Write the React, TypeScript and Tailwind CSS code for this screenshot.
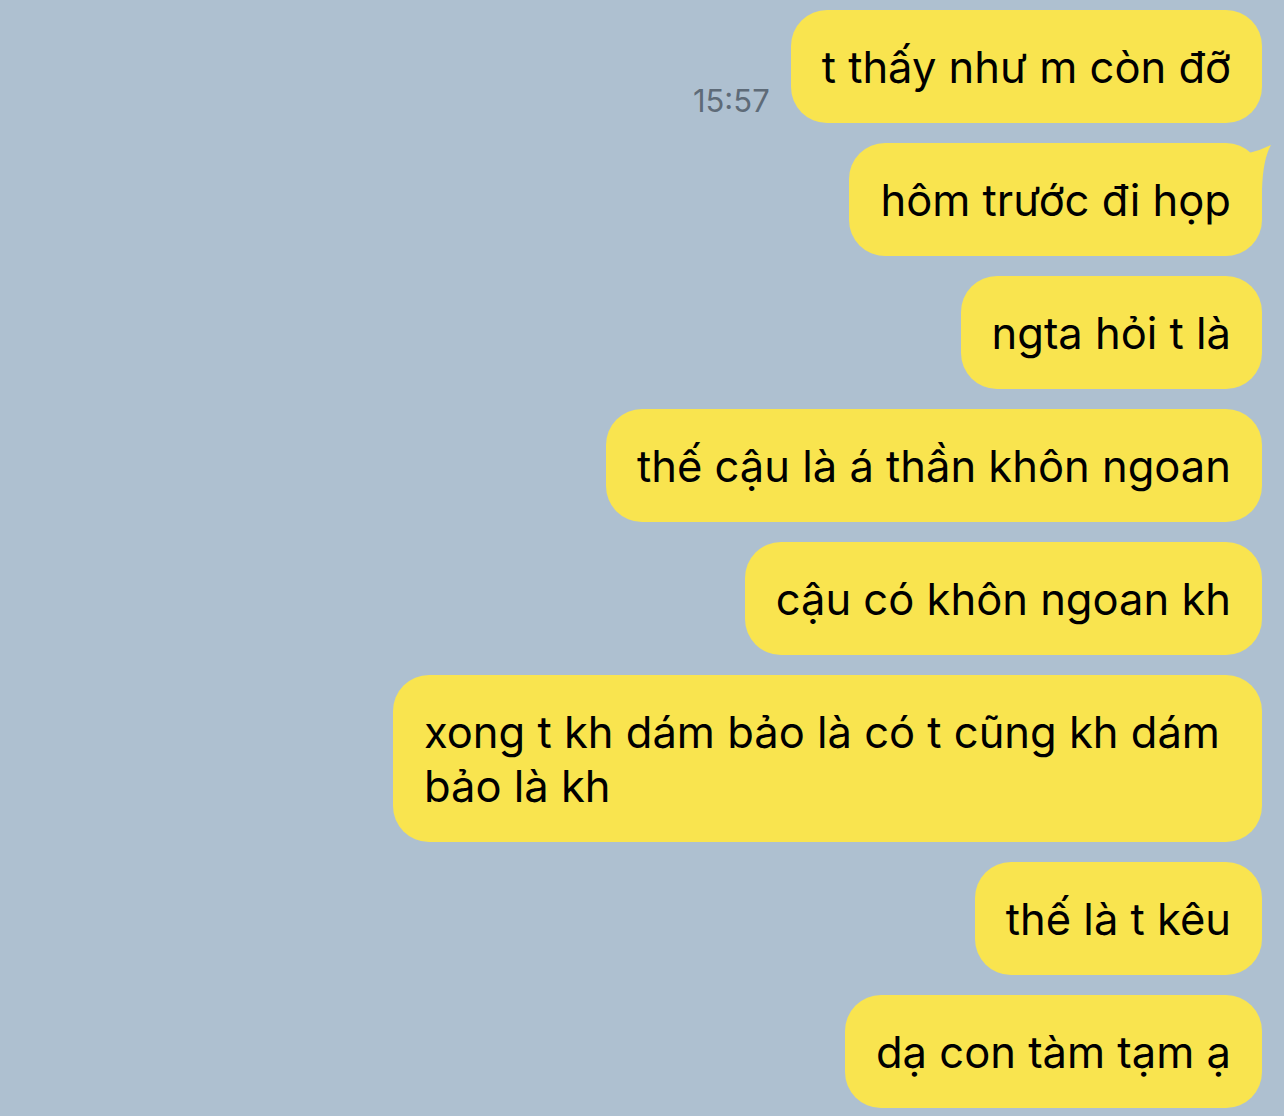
import React from "react";

type Msg = { text: React.ReactNode; time?: string; tail?: boolean; wide?: boolean };

const messages: Msg[] = [
  { text: "t thấy như m còn đỡ", time: "15:57" },
  { text: "hôm trước đi họp", tail: true },
  { text: "ngta hỏi t là" },
  { text: "thế cậu là á thần khôn ngoan" },
  { text: "cậu có khôn ngoan kh" },
  {
    text: (
      <>
        xong t kh dám bảo là có t cũng kh dám
        <br />
        bảo là kh
      </>
    ),
    wide: true,
  },
  { text: "thế là t kêu" },
  { text: "dạ con tàm tạm ạ" },
];

function Bubble({ msg }: { msg: Msg }) {
  return (
    <div className="flex items-end gap-[21px]">
      {msg.time && (
        <span className="mb-[4px] text-[31px] leading-[36px] text-[#5e6b78]">
          {msg.time}
        </span>
      )}
      <div
        className={
          msg.wide
            ? "relative w-[869px] whitespace-nowrap rounded-[36px] bg-[#f9e44f] px-[31px] py-[29.5px] text-[43.5px] leading-[54px] text-black"
            : "relative whitespace-nowrap rounded-[36px] bg-[#f9e44f] px-[31px] py-[29.5px] text-[43.5px] leading-[54px] text-black"
        }
      >
        {msg.tail && (
          <svg
            className="absolute -right-[10px] top-0"
            width="50"
            height="46"
            viewBox="0 0 50 46"
          >
            <path d="M27 10 Q39 7 49 2 Q41 16 40 46 L27 46 Z" fill="#f9e44f" />
          </svg>
        )}
        <span className="relative">{msg.text}</span>
      </div>
    </div>
  );
}

export default function App() {
  return (
    <div
      className="flex min-h-[1116px] w-full flex-col items-end gap-[20px] bg-[#aec0d0] pr-[22px] pt-[10px]"
      style={{ fontFamily: "Inter, 'Noto Sans', sans-serif" }}
    >
      {messages.map((m, i) => (
        <Bubble key={i} msg={m} />
      ))}
    </div>
  );
}
